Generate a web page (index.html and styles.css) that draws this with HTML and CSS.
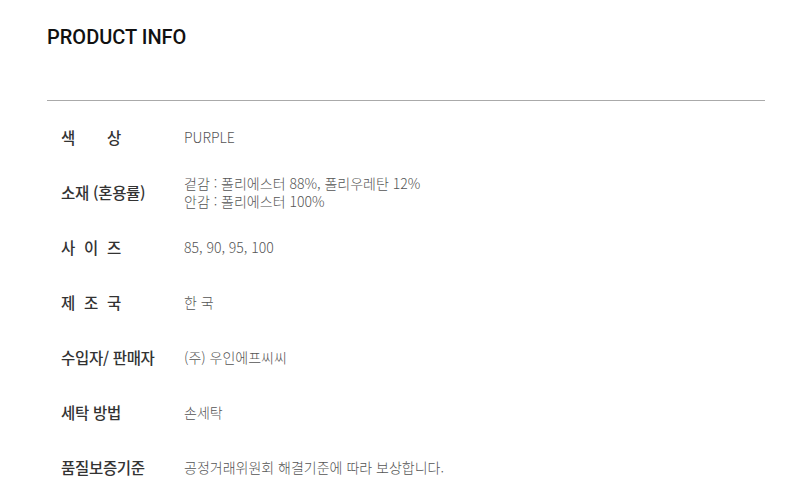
FILE: index.html
```html
<!DOCTYPE html>
<html lang="ko">
<head>
    <meta charset="UTF-8">
    <meta name="viewport" content="width=device-width, initial-scale=1.0">
    <title>Product Info</title>
    <link rel="stylesheet" href="styles.css">
</head>
<body>
    <div id="info-container">
        <h2 class="info-title">PRODUCT INFO</h2>

        <div class="info-table">
            <div class="info-row">
                <div class="info-label spread"><span>색</span><span>상</span></div>
                <div class="info-value">PURPLE</div>
            </div>
            <div class="info-row">
                <div class="info-label">소재 (혼용률)</div>
                <div class="info-value">
                    <p>겉감 : 폴리에스터 88%, 폴리우레탄 12%</p>
                    <p>안감 : 폴리에스터 100%</p>
                </div>
            </div>
            <div class="info-row">
                <div class="info-label spread"><span>사</span><span>이</span><span>즈</span></div>
                <div class="info-value">85, 90, 95, 100</div>
            </div>
            <div class="info-row">
                <div class="info-label spread"><span>제</span><span>조</span><span>국</span></div>
                <div class="info-value">한 국</div>
            </div>
            <div class="info-row">
                <div class="info-label">수입자/ 판매자</div>
                <div class="info-value">(주) 우인에프씨씨</div>
            </div>
            <div class="info-row">
                <div class="info-label">세탁 방법</div>
                <div class="info-value">손세탁</div>
            </div>
            <div class="info-row">
                <div class="info-label">품질보증기준</div>
                <div class="info-value">공정거래위원회 해결기준에 따라 보상합니다.</div>
            </div>
        </div>
    </div>
</body>
</html>
```

FILE: styles.css
```css
/* Global Styling */
body {
    margin: 0;
    font-family: 'Noto Sans CJK KR', 'Noto Sans', sans-serif;
    background: #fff;
    color: #222;
}

#info-container {
    width: 718px;
    margin-left: 47px;
    padding-top: 24px;
}

.info-title {
    margin: 0;
    font-family: Roboto, 'Noto Sans CJK KR', sans-serif;
    font-size: 20px;
    font-weight: 500;
    line-height: 26px;
    color: #111;
    padding-bottom: 50px;
    border-bottom: 1px solid #aaa;
}

/* Info rows */
.info-table {
    padding-top: 8px;
}

.info-row {
    display: flex;
    align-items: center;
    height: 55px;
    padding-left: 14px;
}

.info-label {
    width: 123px;
    flex-shrink: 0;
    font-size: 15.5px;
    font-weight: 500;
    color: #333;
    letter-spacing: -0.3px;
}

.info-label.spread {
    width: 60px;
    margin-right: 63px;
    display: flex;
    justify-content: space-between;
}

.info-value {
    font-size: 14px;
    font-weight: 300;
    line-height: 18px;
    color: #555;
}

.info-value p {
    margin: 0;
    height: 18px;
    overflow: visible;
}

.info-value p + p {
    margin-top: 0;
}
```
